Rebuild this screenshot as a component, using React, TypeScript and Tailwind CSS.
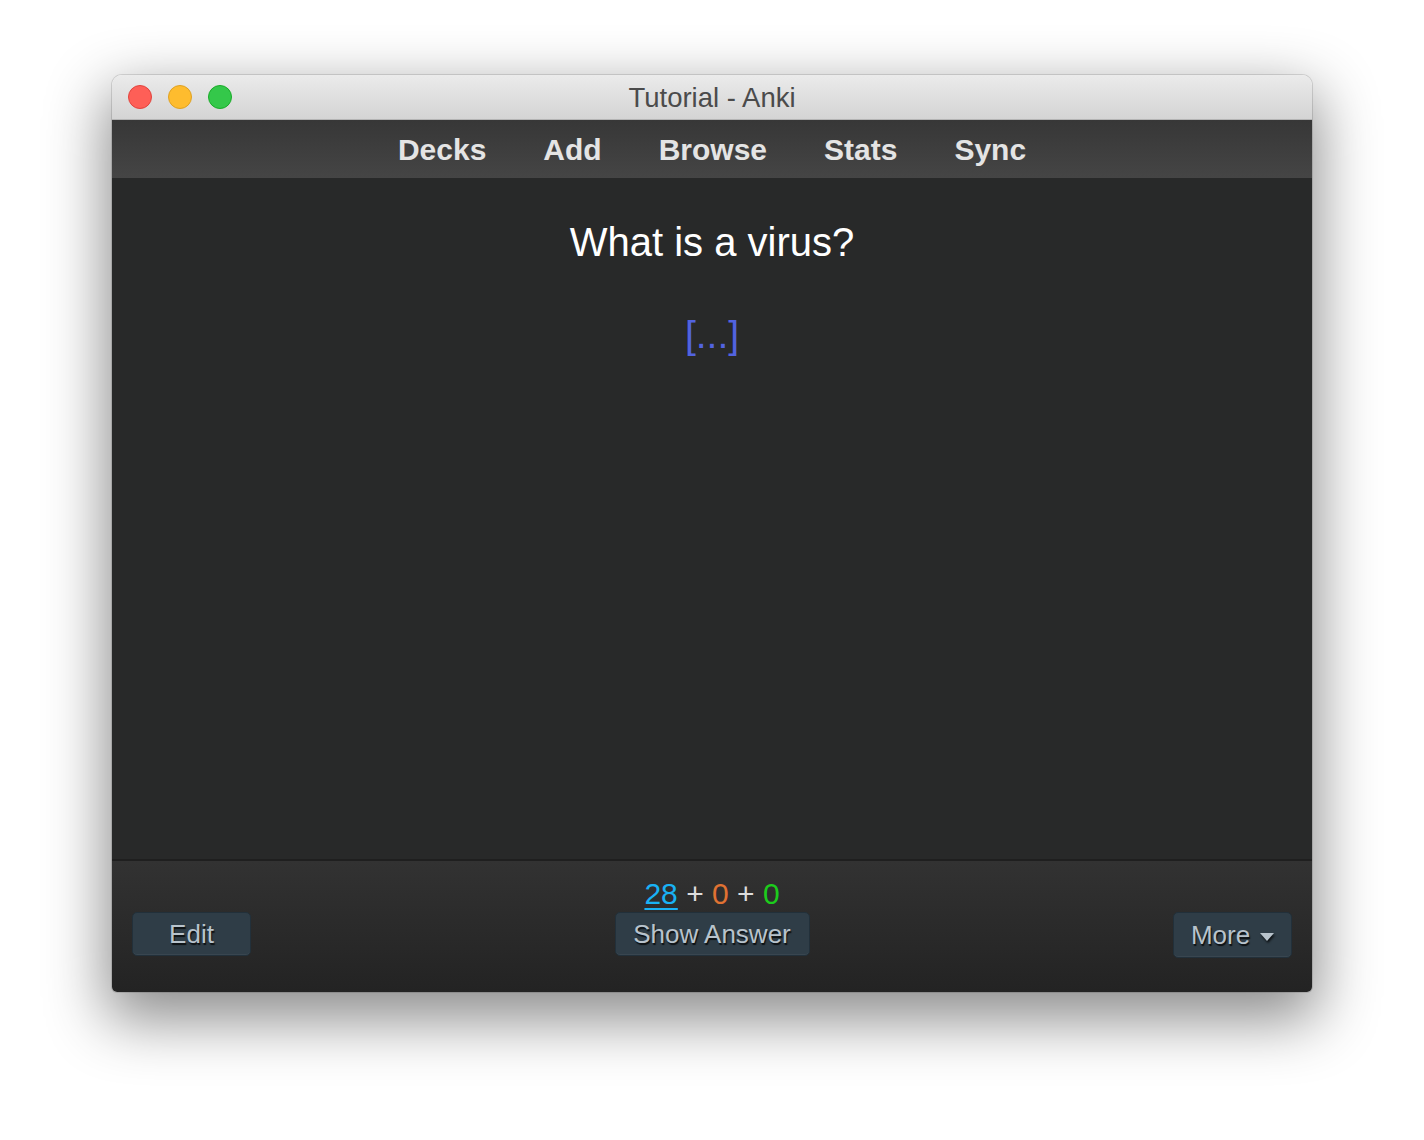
const font = { fontFamily: '"Liberation Sans", Arial, Helvetica, sans-serif' };

function TrafficLights() {
  return (
    <div className="flex items-center gap-[16px]">
      <span className="block h-[24px] w-[24px] rounded-full border border-[#e0443e] bg-[#fe5f57]" />
      <span className="block h-[24px] w-[24px] rounded-full border border-[#dea123] bg-[#febc2e]" />
      <span className="block h-[24px] w-[24px] rounded-full border border-[#1aab29] bg-[#34c84a]" />
    </div>
  );
}

function DarkButton({ children, className = "" }: { children: React.ReactNode; className?: string }) {
  return (
    <button
      type="button"
      className={
        "flex items-center justify-center rounded-[5px] border border-[#22303a] bg-[#2f3d47] text-[26px] leading-none text-[#b8c3cc] [text-shadow:1px_2px_1px_rgba(0,0,0,0.75)] shadow-[inset_0_-1px_0_rgba(255,255,255,0.05)] " +
        className
      }
    >
      {children}
    </button>
  );
}

export default function App() {
  const tabs = ["Decks", "Add", "Browse", "Stats", "Sync"];

  return (
    <div className="min-h-[1140px] bg-white pt-[75px]" style={font}>
      <div className="mx-auto flex h-[917px] w-[1200px] flex-col overflow-hidden rounded-t-[10px] rounded-b-[5px] shadow-[0_22px_60px_6px_rgba(0,0,0,0.45),0_0_0_1px_rgba(0,0,0,0.12)]">
        {/* title bar */}
        <div className="relative flex h-[45px] shrink-0 items-center border-b border-[#b4b4b4] bg-gradient-to-b from-[#ebebeb] to-[#d4d4d4] px-[16px]">
          <TrafficLights />
          <div className="absolute inset-x-0 top-0 flex h-[46px] items-center justify-center text-[27.5px] text-[#4b4b4b]">
            Tutorial - Anki
          </div>
        </div>

        {/* toolbar */}
        <nav className="flex h-[58px] shrink-0 items-center justify-center gap-[57px] bg-gradient-to-b from-[#373737] to-[#454545] text-[30px] font-bold text-[#e4e4e4]">
          {tabs.map((t) => (
            <span key={t}>{t}</span>
          ))}
        </nav>

        {/* card */}
        <main className="flex flex-1 flex-col items-center bg-[#282929] pt-[40px] text-center">
          <div className="text-[40px] leading-[48px] text-white">What is a virus?</div>
          <div className="mt-[46px] text-[39px] leading-[46px] text-[#5263e0]">[...]</div>
        </main>

        {/* bottom bar */}
        <footer className="grid h-[133px] shrink-0 grid-cols-[1fr_auto_1fr] items-start border-t-2 border-[#1f1f1f] bg-gradient-to-b from-[#323232] to-[#232323] px-[20px] pt-[15px]">
          <div className="flex pt-[36px]">
            <DarkButton className="h-[44px] w-[119px]">Edit</DarkButton>
          </div>
          <div className="flex flex-col items-center">
            <div className="h-[36px] text-[30px] leading-[36px] text-[#dddddd]">
              <span className="text-[#19b2f5] underline decoration-[2px] underline-offset-[4px]">28</span>
              <span> + </span>
              <span className="text-[#e07232]">0</span>
              <span> + </span>
              <span className="text-[#1ccc1c]">0</span>
            </div>
            <DarkButton className="h-[44px] w-[195px]">Show Answer</DarkButton>
          </div>
          <div className="flex justify-end pt-[36px]">
            <DarkButton className="h-[46px] w-[119px] gap-[10px]">
              <span>More</span>
              <svg width="14" height="8" viewBox="0 0 14 8" className="mt-[3px] drop-shadow-[1px_2px_1px_rgba(0,0,0,0.75)]">
                <path d="M0 0 H14 L7 8 Z" fill="#b8c3cc" />
              </svg>
            </DarkButton>
          </div>
        </footer>
      </div>
    </div>
  );
}
